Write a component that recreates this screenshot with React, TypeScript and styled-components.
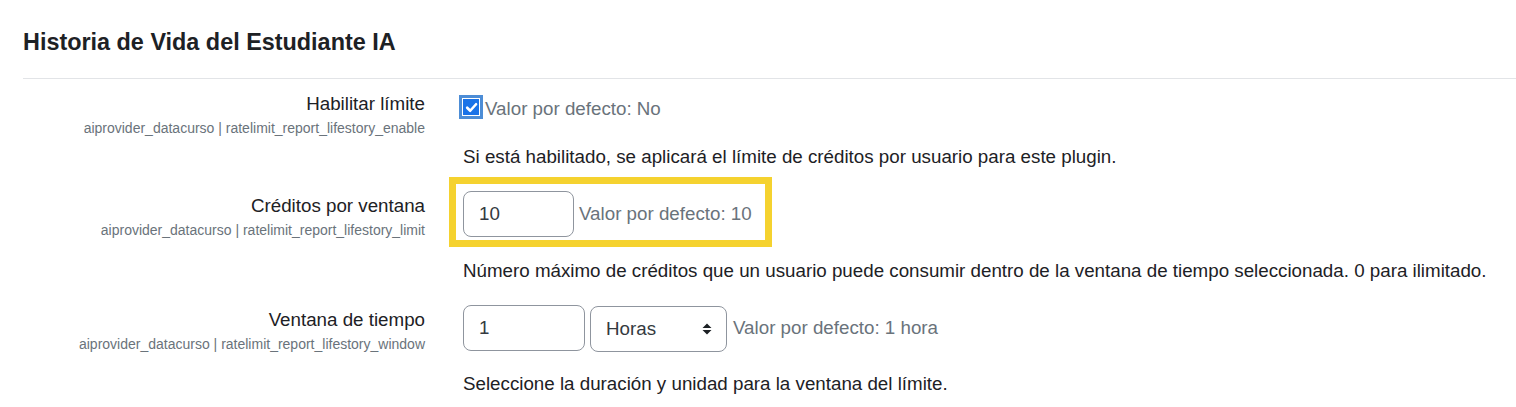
import React from "react";
import styled, { createGlobalStyle } from "styled-components";

const GlobalStyle = createGlobalStyle`
  body {
    margin: 0;
    background: #fff;
    font-family: "Liberation Sans", Arial, sans-serif;
    color: #1d2125;
  }
`;

const Page = styled.div`
  padding: 28px 0 0 23px;
  overflow: hidden;
`;

const Title = styled.h3`
  margin: 0;
  font-size: 23.4px;
  line-height: 28px;
  font-weight: 700;
  color: #1d2125;
`;

const Divider = styled.div`
  margin-top: 22px;
  border-top: 1px solid #e2e4e7;
`;

const SettingsList = styled.div`
  padding-top: 11px;
`;

const Setting = styled.div`
  display: grid;
  grid-template-columns: 402px 1fr;
  column-gap: 38px;
  margin-bottom: 20px;
`;

const LabelCol = styled.div`
  text-align: right;
`;

const LabelText = styled.div<{ $offset?: number }>`
  font-size: 18.75px;
  line-height: 28px;
  padding-top: ${(p) => p.$offset ?? 0}px;
`;

const ShortName = styled.div`
  font-size: 14px;
  line-height: 21px;
  color: #6a737b;
`;

const Content = styled.div`
  display: flex;
  flex-direction: column;
  min-width: 0;
`;

const Controls = styled.div`
  display: flex;
  align-items: center;
  gap: 5px;
  height: 46px;
`;

const CheckRow = styled.div`
  display: flex;
  align-items: flex-start;
  padding-top: 5px;
`;

const Check = styled.span`
  display: inline-flex;
  align-items: center;
  justify-content: center;
  width: 16px;
  height: 16px;
  margin: 4px 6px 4px 0;
  background: #1a73e8;
  box-shadow: 0 0 0 1px #fff, 0 0 0 4px #4d8dd6;
`;

const DefaultInfo = styled.span<{ $gap?: number }>`
  font-size: 18.75px;
  line-height: 28px;
  color: #6a737b;
  white-space: nowrap;
  margin-left: ${(p) => p.$gap ?? 0}px;
`;

const TextInput = styled.input<{ $width: number }>`
  box-sizing: border-box;
  width: ${(p) => p.$width}px;
  height: 46px;
  padding: 0 15px;
  border: 1px solid #8f959e;
  border-radius: 8px;
  font-family: inherit;
  font-size: 18.75px;
  color: #343a40;
  background: #fff;
  outline: none;
`;

const SelectWrap = styled.div`
  position: relative;
  display: inline-flex;
  margin-top: 1px;
`;

const Select = styled.select`
  box-sizing: border-box;
  width: 137px;
  height: 46px;
  padding: 0 30px 0 15px;
  border: 1px solid #8f959e;
  border-radius: 8px;
  appearance: none;
  font-family: inherit;
  font-size: 18.75px;
  color: #343a40;
  background: #fff;
  outline: none;
`;

const SelectArrow = styled.svg`
  position: absolute;
  right: 15px;
  top: 17px;
  width: 10px;
  height: 12px;
  pointer-events: none;
`;

const Highlight = styled.div`
  position: relative;
  display: inline-flex;
  align-items: center;
  gap: 5px;
  &::after {
    content: "";
    position: absolute;
    top: -14px;
    left: -14px;
    right: -20px;
    bottom: -10px;
    border: 7px solid #f5d22f;
    pointer-events: none;
  }
`;

const Description = styled.div<{ $gap?: number }>`
  margin-top: ${(p) => p.$gap ?? 20}px;
  font-size: 18.75px;
  line-height: 28px;
  white-space: nowrap;
`;

const CheckMark = () => (
  <svg width="13" height="13" viewBox="0 0 12 12">
    <path
      d="M2 6.2 L4.8 9 L10.2 3"
      fill="none"
      stroke="#fff"
      strokeWidth="2.4"
      strokeLinecap="round"
      strokeLinejoin="round"
    />
  </svg>
);

export default function App() {
  return (
    <>
      <GlobalStyle />
      <Page>
        <Title>Historia de Vida del Estudiante IA</Title>
        <Divider />
        <SettingsList>
          <Setting>
            <LabelCol>
              <LabelText>Habilitar límite</LabelText>
              <ShortName>aiprovider_datacurso | ratelimit_report_lifestory_enable</ShortName>
            </LabelCol>
            <Content>
              <CheckRow>
                <Check>
                  <CheckMark />
                </Check>
                <DefaultInfo>Valor por defecto: No</DefaultInfo>
              </CheckRow>
              <Description>
                Si está habilitado, se aplicará el límite de créditos por usuario para este plugin.
              </Description>
            </Content>
          </Setting>

          <Setting>
            <LabelCol>
              <LabelText $offset={1}>Créditos por ventana</LabelText>
              <ShortName>aiprovider_datacurso | ratelimit_report_lifestory_limit</ShortName>
            </LabelCol>
            <Content>
              <Controls>
                <Highlight>
                  <TextInput $width={111} defaultValue="10" readOnly />
                  <DefaultInfo>Valor por defecto: 10</DefaultInfo>
                </Highlight>
              </Controls>
              <Description>
                Número máximo de créditos que un usuario puede consumir dentro de la ventana de tiempo
                seleccionada. 0 para ilimitado.
              </Description>
            </Content>
          </Setting>

          <Setting>
            <LabelCol>
              <LabelText $offset={1}>Ventana de tiempo</LabelText>
              <ShortName>aiprovider_datacurso | ratelimit_report_lifestory_window</ShortName>
            </LabelCol>
            <Content>
              <Controls>
                <TextInput $width={122} defaultValue="1" readOnly />
                <SelectWrap>
                  <Select defaultValue="horas">
                    <option value="horas">Horas</option>
                  </Select>
                  <SelectArrow viewBox="0 0 10 12">
                    <path d="M0.5 5 L5 0.5 L9.5 5 Z M0.5 7 L9.5 7 L5 11.5 Z" fill="#1d2125" />
                  </SelectArrow>
                </SelectWrap>
                <DefaultInfo $gap={1}>Valor por defecto: 1 hora</DefaultInfo>
              </Controls>
              <Description $gap={19}>
                Seleccione la duración y unidad para la ventana del límite.
              </Description>
            </Content>
          </Setting>
        </SettingsList>
      </Page>
    </>
  );
}
